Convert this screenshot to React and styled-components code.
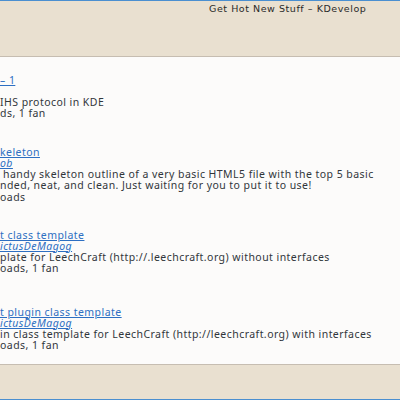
import React from "react";
import styled, { createGlobalStyle } from "styled-components";

const GlobalStyle = createGlobalStyle`
  html, body {
    margin: 0;
    padding: 0;
    background: #e9e0d0;
    overflow: hidden;
  }
`;

const entries = [
  {
    title: "– 1",
    author: "",
    lines: ["IHS protocol in KDE"],
    stats: "ds, 1 fan",
    space: 17.5,
  },
  {
    title: "keleton",
    author: "ob",
    lines: [
      "handy skeleton outline of a very basic HTML5 file with the top 5 basic",
      "nded, neat, and clean. Just waiting for you to put it to use!",
    ],
    indent: [3, 0],
    stats: "oads",
    space: 27,
  },
  {
    title: "t class template",
    author: "ictusDeMagog",
    lines: ["plate for LeechCraft (http://.leechcraft.org) without interfaces"],
    stats: "oads, 1 fan",
    space: 26.75,
  },
  {
    title: "t plugin class template",
    author: "ictusDeMagog",
    lines: [
      "in class template for LeechCraft (http://leechcraft.org) with interfaces",
    ],
    stats: "oads, 1 fan",
    space: 32,
  },
];

export default function App() {
  return (
    <Window>
      <GlobalStyle />
      <TitleBar>
        <Title>Get Hot New Stuff – KDevelop</Title>
      </TitleBar>
      <Content>
        {entries.map((e, i) => (
          <Entry key={i} $space={e.space}>
            <Line>
              <Link href="#">{e.title}</Link>
            </Line>
            <Line>
              {e.author ? <Author href="#">{e.author}</Author> : "\u00a0"}
            </Line>
            {e.lines.map((l, j) => (
              <Line key={j} $indent={e.indent ? e.indent[j] : 0}>
                {l}
              </Line>
            ))}
            <Line>{e.stats}</Line>
          </Entry>
        ))}
      </Content>
      <Footer />
    </Window>
  );
}

const Window = styled.div`
  height: 400px;
  box-sizing: border-box;
  display: flex;
  flex-direction: column;
  border-top: 1px solid #4a8fd0;
  border-bottom: 1px solid #4a8fd0;
  background: #e9e0d0;
`;

const TitleBar = styled.div`
  height: 56px;
  flex: none;
  padding-left: 209px;
  padding-top: 2px;
  box-sizing: border-box;
  border-bottom: 1px solid #c6bdb1;
`;

const Title = styled.div`
  font-family: "DejaVu Sans", Verdana, sans-serif;
  font-size: 9.5px;
  letter-spacing: 0.55px;
  line-height: 12px;
  color: #2a2a2a;
  white-space: nowrap;
`;

const Content = styled.div`
  flex: 1;
  background: #fcfbfa;
  border-bottom: 1px solid #c6bdb1;
  overflow: hidden;
  font-family: "Noto Sans", "Open Sans", sans-serif;
  font-size: 10.5px;
  letter-spacing: 0.45px;
  line-height: 11.25px;
  color: #31363b;
`;

const Entry = styled.div`
  margin-top: ${(p) => p.$space}px;
`;

const Line = styled.div`
  white-space: nowrap;
  padding-left: ${(p) => p.$indent || 0}px;
`;

const Link = styled.a`
  color: #2d6fc2;
  text-decoration: underline;
`;

const Author = styled(Link)`
  font-style: italic;
`;

const Footer = styled.div`
  height: 34px;
  flex: none;
`;
